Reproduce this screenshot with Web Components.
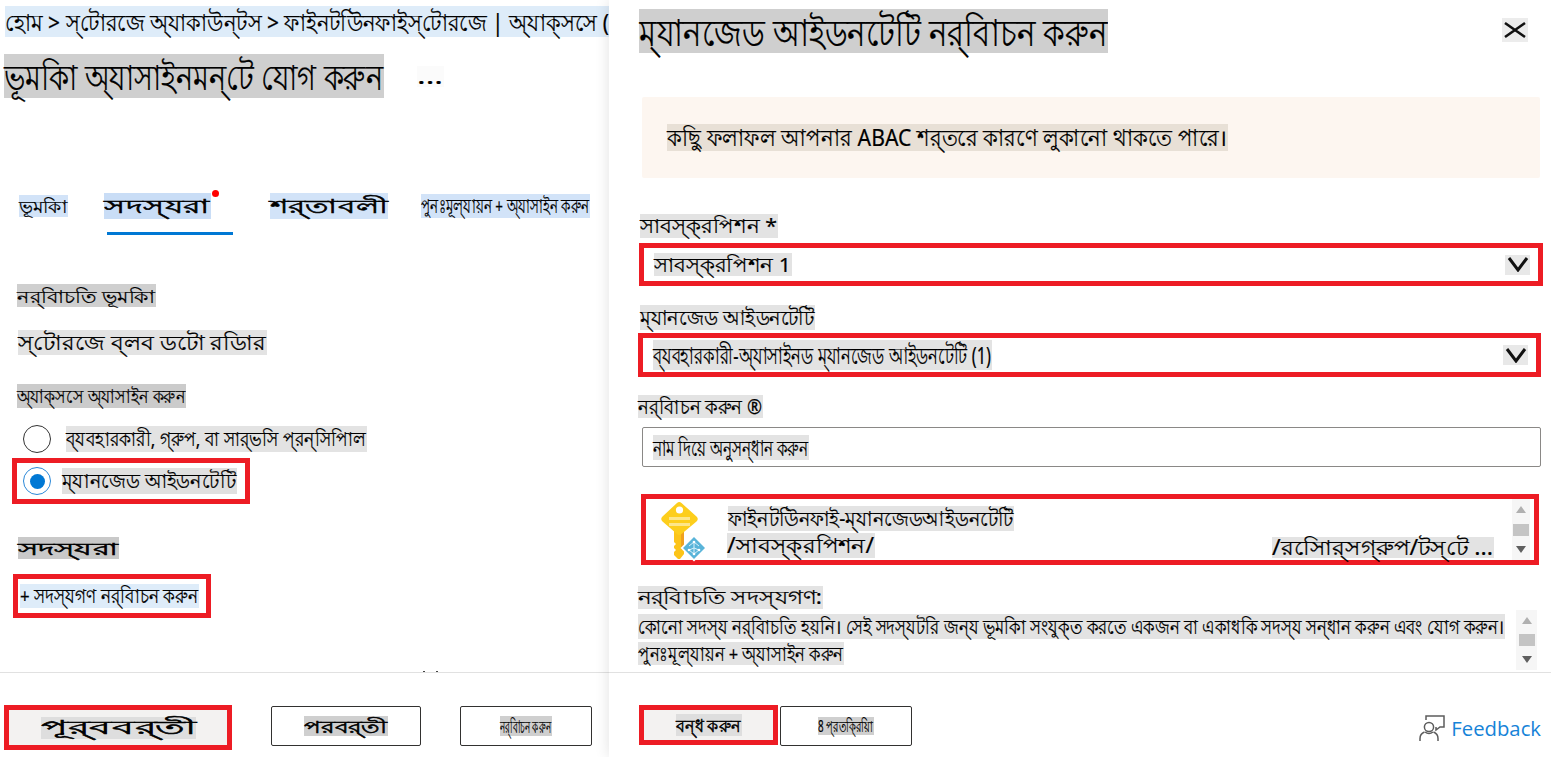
<!DOCTYPE html>
<html lang="bn">
<head>
<meta charset="utf-8">
<title>ভূমিকা অ্যাসাইনমেন্ট যোগ করুন</title>
<style>
  html, body { margin: 0; height: 757px; overflow: hidden; background: #fff; }
  body { display: flex; font-family: "Noto Sans", "Liberation Sans", sans-serif; color: #000; }
</style>
</head>
<body>
<left-blade></left-blade>
<right-blade></right-blade>

<script>
// text on a tinted block, squeezed or stretched to the width of the block
class TextChip extends HTMLElement {
  constructor() {
    super();
    this.attachShadow({ mode: "open" });
    this.shadowRoot.innerHTML = `
      <style>
        :host { display: inline-flex; align-items: center; flex: none; white-space: nowrap; line-height: 1; -webkit-text-stroke: .2px #000; }
        span { display: inline-block; flex: none; transform-origin: 0 50%; }
      </style>
      <span><slot></slot></span>
    `;
  }

  connectedCallback() {
    const w = +this.getAttribute("w");
    this.style.width = w + "px";
    this.style.height = this.getAttribute("h") + "px";
    this.style.fontSize = this.getAttribute("fs") + "px";
    this.style.background = this.getAttribute("bg") || "transparent";
    if (this.hasAttribute("bold")) this.style.webkitTextStroke = ".55px #000";
    const span = this.shadowRoot.querySelector("span");
    const natural = span.getBoundingClientRect().width;
    if (natural > 0) span.style.transform = `scaleX(${(w - 1) / natural})`;
  }
}

class RedBox extends HTMLElement {
  constructor() {
    super();
    this.attachShadow({ mode: "open" });
    this.shadowRoot.innerHTML = `
      <style>
        :host { display: flex; align-items: center; box-sizing: border-box; border: 5px solid #ed1c24; flex: none; }
      </style>
      <slot></slot>
    `;
  }
}

class RadioDot extends HTMLElement {
  constructor() {
    super();
    this.attachShadow({ mode: "open" });
    const on = this.hasAttribute("checked");
    this.shadowRoot.innerHTML = `
      <style>
        :host { display: flex; align-items: center; justify-content: center; box-sizing: border-box; flex: none;
          width: 28px; height: 28px; border-radius: 50%; border: 1px solid ${on ? "#2b88d8" : "#333"}; }
        i { width: 15px; height: 15px; border-radius: 50%; background: #0078d4; }
      </style>
      ${on ? "<i></i>" : ""}
    `;
  }
}

class OutlineButton extends HTMLElement {
  constructor() {
    super();
    this.attachShadow({ mode: "open" });
    this.shadowRoot.innerHTML = `
      <style>
        :host { display: flex; align-items: center; justify-content: center; box-sizing: border-box; flex: none;
          height: 40px; border: 1px solid #323130; border-radius: 2px; }
      </style>
      <slot></slot>
    `;
  }
}

class ScrollRail extends HTMLElement {
  constructor() {
    super();
    this.attachShadow({ mode: "open" });
    this.shadowRoot.innerHTML = `
      <style>
        :host { display: flex; flex-direction: column; align-items: center; justify-content: space-between; box-sizing: border-box;
          flex: none; background: #f6f6f6; padding: 7px 0; }
        .thumb { width: 100%; height: 12px; background: #c4c4c4; }
        .thumb-wrap { width: 16px; }
        b { width: 0; height: 0; border: 5px solid transparent; }
        .up { border-top: 0; border-bottom: 7px solid #b0b0b0; }
        .down { border-bottom: 0; border-top: 7px solid #5f5f5f; }
      </style>
      <b class="up"></b>
      <div class="thumb-wrap"><div class="thumb"></div></div>
      <b class="down"></b>
    `;
  }
}

class KeyIcon extends HTMLElement {
  constructor() {
    super();
    this.attachShadow({ mode: "open" });
    this.shadowRoot.innerHTML = `
      <style>:host { display: block; flex: none; width: 42px; height: 60px; } svg { display: block; overflow: visible; }</style>
      <svg width="42" height="60" viewBox="0 0 42 60">
        <path d="M14 30h10v23l-4 5h-2l-4-4v-3l2-2-2-2v-2l2-2-2-2z" fill="#fcc419"/>
        <path d="M21 30h3v16l-3 3z" fill="#f0a11f"/>
        <path d="M17 2a3.500 3.500 0 0 1 4.500 0l15 13.500a3.500 3.500 0 0 1 0 5L21.500 33a3.500 3.500 0 0 1-4.500 0L2.500 20.500a3.500 3.500 0 0 1 0-5z" fill="#fdce1c"/>
        <circle cx="19.500" cy="9" r="3.600" fill="#fff"/>
        <rect x="9" y="16" width="21" height="3" fill="#fde68a"/>
        <rect x="9" y="22" width="21" height="3" fill="#fde68a"/>
        <path d="M34 33.500l13.500 13.500-13.500 13.500-13.500-13.500z" fill="#fff"/>
        <path d="M34 36l11 11-11 11-11-11z" fill="#59b4d9"/>
        <path d="M34 41v12M34 47l-5 2M34 47l5 2M29 49l5 4 5-4M29 45l5-4 5 4" fill="none" stroke="#d7f0fa" stroke-width="1"/>
        <circle cx="34" cy="41" r="1.300" fill="#fff"/><circle cx="29" cy="49" r="1.300" fill="#fff"/>
        <circle cx="39" cy="49" r="1.300" fill="#fff"/><circle cx="34" cy="53" r="1.300" fill="#fff"/>
      </svg>
    `;
  }
}

class FeedbackLink extends HTMLElement {
  constructor() {
    super();
    this.attachShadow({ mode: "open" });
    this.shadowRoot.innerHTML = `
      <style>
        :host { display: flex; align-items: center; gap: 6px; color: #1683d8; font: 20.300px "Open Sans", "Noto Sans", sans-serif; flex: none; }
        svg { display: block; }
      </style>
      <svg width="26" height="26" viewBox="0 0 26 26" fill="none" stroke="#5c5c5c" stroke-width="1.500">
        <path d="M7 5V1h18v11h-4l-4 3v-3"/>
        <circle cx="10" cy="12" r="4.600"/>
        <path d="M1 26v-2.500a7 7 0 0 1 4.500-6.500M19 26v-2.500a7 7 0 0 0-4.500-6.500"/>
        <path d="M14 17c-1.300 1-2.500 1.500-4 1.500s-2.700-.5-4-1.500"/>
      </svg>
      <span>Feedback</span>
    `;
  }
}

class LeftBlade extends HTMLElement {
  constructor() {
    super();
    this.attachShadow({ mode: "open" });
    this.shadowRoot.innerHTML = `
      <style>
        :host { display: flex; flex-direction: column; flex: none; width: 609px; height: 757px; overflow: hidden; box-sizing: border-box; }
        .crumb { margin: 6px 0 0 5px; }
        .title { display: flex; align-items: flex-start; margin: 17px 0 0 4px; }
        .more { margin: 12px 0 0 33px; }
        .tabs { position: relative; display: flex; margin: 95px 0 0 19px; height: 26px; align-items: center; }
        .dot { position: absolute; left: 193px; top: -3px; width: 7px; height: 7px; border-radius: 50%; background: #f00; }
        .underline { margin: 13px 0 0 107px; width: 126px; height: 3px; background: #0078d4; }
        .block { margin-left: 17px; }
        .row { display: flex; align-items: center; }
        .spacer { flex: 1; }
        .foot { position: relative; height: 85px; box-sizing: border-box; border-top: 1px solid #e1e1e1; padding: 32px 0 0 4px; display: flex; align-items: flex-start; }
        .foot::before, .foot::after { content: ""; position: absolute; top: -2px; width: 2px; height: 1px; background: #444; }
        .foot::before { left: 423px; }
        .foot::after { left: 436px; }
      </style>
      <text-chip class="crumb" w="605" h="31" fs="24" bg="#deecf9">হোম &gt; স্‌টোরজে অ্‌যাকাউন্‌টস &gt; ফাইনটউিনফাইস্‌টোরজে | অ্‌যাক্‌সসে (</text-chip>
      <div class="title">
        <text-chip w="380" h="44" fs="35" bg="#cfcfcf">ভূমকিা অ্‌যাসাইনমন্‌টে যোগ করুন</text-chip>
        <text-chip class="more" w="27" h="21" fs="21" bg="#fbfbfb">...</text-chip>
      </div>
      <div class="tabs">
        <text-chip w="49" h="22" fs="18" bg="#d2e3f8">ভূমকিা</text-chip>
        <text-chip w="107" h="26" fs="19" bg="#c9ddf6" bold style="margin-left:36px">সদস্‌যরা</text-chip>
        <text-chip w="118" h="26" fs="19" bg="#d2e3f8" bold style="margin-left:59px">শর্‌তাবলী</text-chip>
        <text-chip w="169" h="24" fs="20" bg="#d2e3f8" style="margin-left:33px">পুনঃমূল্‌যায়ন + অ্‌যাসাইন করুন</text-chip>
        <span class="dot"></span>
      </div>
      <div class="underline"></div>
      <text-chip class="block" style="margin-top:49px" w="139" h="23" fs="18" bg="#cfcfcf">নর্‌বিাচতি ভূমকিা</text-chip>
      <text-chip class="block" style="margin:23px 0 0 18px" w="249" h="25" fs="21" bg="#e3e3e3">স্‌টোরজে ব্‌লব ডটো রডিার</text-chip>
      <text-chip class="block" style="margin-top:29px" w="169" h="24" fs="19" bg="#cbcbcb">অ্‌যাক্‌সসে অ্‌যাসাইন করুন</text-chip>
      <div class="row" style="margin:17px 0 0 23px">
        <radio-dot></radio-dot>
        <text-chip w="301" h="26" fs="20" bg="#e3e3e3" style="margin-left:15px">ব্‌যবহারকারী, গ্‌রুপ, বা সার্‌ভসি প্‌রন্‌সিপিাল</text-chip>
      </div>
      <red-box style="margin:5px 0 0 12px;width:238px;height:46px;padding-left:6px">
        <radio-dot checked></radio-dot>
        <text-chip w="175" h="26" fs="20" bg="#e0e0e0" style="margin-left:11px">ম্‌যানজেড আইডনটেটি</text-chip>
      </red-box>
      <text-chip style="margin:33px 0 0 18px" w="101" h="22" fs="17" bg="#c9c9c9" bold>সদস্‌যরা</text-chip>
      <red-box style="margin:15px 0 0 13px;width:198px;height:44px;padding-left:2px">
        <text-chip w="179" h="24" fs="20" bg="#deecf9">+ সদস্‌যগণ নর্‌বিাচন করুন</text-chip>
      </red-box>
      <div class="spacer"></div>
      <div class="foot">
        <red-box style="width:228px;height:45px;background:#f3f2f1;justify-content:center">
          <text-chip w="155" h="22" fs="19" bg="#dedede" bold>পূর্‌ববর্‌তী</text-chip>
        </red-box>
        <outline-button style="width:150px;margin:1px 0 0 39px"><text-chip w="84" h="20" fs="17" bg="#cfcfcf" bold>পরবর্‌তী</text-chip></outline-button>
        <outline-button style="width:132px;margin:1px 0 0 39px"><text-chip w="52" h="20" fs="18" bg="#cfcfcf">নর্‌বিাচন করুন</text-chip></outline-button>
      </div>
    `;
  }
}

class RightBlade extends HTMLElement {
  constructor() {
    super();
    this.attachShadow({ mode: "open" });
    this.shadowRoot.innerHTML = `
      <style>
        :host { display: flex; flex-direction: column; flex: none; width: 942px; height: 757px; overflow: hidden; box-sizing: border-box;
          background: #fff; box-shadow: 0 0 14px rgba(0,0,0,.12); position: relative; }
        .head { display: flex; justify-content: space-between; align-items: flex-start; margin: 9px 23px 0 30px; }
        .close { display: flex; align-items: center; justify-content: center; width: 26px; height: 24px; background: #ececec; margin-top: 9px; }
        .warn { display: flex; align-items: center; box-sizing: border-box; margin: 44px 0 0 33px; width: 898px; height: 81px; padding-left: 25px; background: #fdf6f0; border-radius: 2px; }
        .select { justify-content: space-between; padding: 0 8px 0 10px; }
        .chev { display: flex; align-items: center; justify-content: center; width: 25px; height: 20px; background: #e8e8e8; }
        .input { display: flex; align-items: center; box-sizing: border-box; margin: 9px 0 0 33px; width: 899px; height: 40px; padding-left: 10px; border: 1px solid #8a8886; border-radius: 2px; }
        .listbox { margin: 27px 0 0 32px; width: 898px; height: 71px; padding-left: 14px; align-items: stretch; }
        .lines { flex: 1; display: flex; flex-direction: column; padding: 7px 0 0 26px; }
        .line2 { display: flex; justify-content: space-between; width: 767px; margin-left: -1px; margin-top: 2px; align-items: flex-end; }
        .picked { display: flex; justify-content: space-between; margin: 1px 14px 0 29px; height: 60px; }
        .picked-text { display: flex; flex-direction: column; gap: 3px; padding-top: 4px; }
        .spacer { flex: 1; }
        .foot { height: 85px; box-sizing: border-box; border-top: 1px solid #e1e1e1; padding: 32px 10px 0 30px; display: flex; align-items: flex-start; }
      </style>
      <div class="head">
        <text-chip w="469" h="44" fs="37" bg="#cfcfcf">ম্‌যানজেড আইডনটেটি নর্‌বিাচন করুন</text-chip>
        <div class="close">
          <svg width="24" height="18" viewBox="0 0 24 18" fill="none" stroke="#111" stroke-width="2.600"><path d="M2 2l20 14M22 2L2 16"/></svg>
        </div>
      </div>
      <div class="warn"><text-chip w="561" h="27" fs="23" bg="#e8e0d6">কছিু ফলাফল আপনার ABAC শর্‌তরে কারণে লুকানো থাকতে পারে।</text-chip></div>
      <text-chip style="margin:36px 0 0 31px" w="138" h="24" fs="20" bg="#e3e3e3">সাবস্‌ক্‌রপিশন *</text-chip>
      <red-box class="select" style="margin:5px 0 0 30px;width:904px;height:43px">
        <text-chip w="138" h="23" fs="20" bg="#e3e3e3">সাবস্‌ক্‌রপিশন 1</text-chip>
        <div class="chev"><svg width="22" height="15" viewBox="0 0 22 15" fill="none" stroke="#111" stroke-width="3"><path d="M2 1l9 12 9-12"/></svg></div>
      </red-box>
      <text-chip style="margin:19px 0 0 31px" w="175" h="25" fs="21" bg="#e3e3e3">ম্‌যানজেড আইডনটেটি</text-chip>
      <red-box class="select" style="margin:3px 0 0 29px;width:903px;height:44px">
        <text-chip w="339" h="30" fs="24" bg="#e3e3e3">ব্‌যবহারকারী-অ্‌যাসাইনড ম্‌যানজেড আইডনটেটি (1)</text-chip>
        <div class="chev"><svg width="22" height="15" viewBox="0 0 22 15" fill="none" stroke="#111" stroke-width="3"><path d="M2 1l9 12 9-12"/></svg></div>
      </red-box>
      <text-chip style="margin:18px 0 0 29px" w="125" h="23" fs="20" bg="#e3e3e3">নর্‌বিাচন করুন ®</text-chip>
      <div class="input"><text-chip w="156" h="25" fs="22" bg="#e3e3e3">নাম দিয়ে অনুসন্‌ধান করুন</text-chip></div>
      <red-box class="listbox">
        <key-icon style="margin-top:2px"></key-icon>
        <div class="lines">
          <text-chip w="286" h="25" fs="21" bg="#e3e3e3">ফাইনটউিনফাই-ম্‌যানজেডআইডনটেটি</text-chip>
          <div class="line2">
            <text-chip w="148" h="25" fs="21" bg="#e3e3e3">/সাবস্‌ক্‌রপিশন/</text-chip>
            <text-chip w="222" h="21" fs="21" bg="#e3e3e3">/রসিোর্‌সগ্‌রুপ/টস্‌টে ...</text-chip>
          </div>
        </div>
        <scroll-rail style="width:18px;margin:0 4px 0 0"></scroll-rail>
      </red-box>
      <text-chip style="margin:21px 0 0 29px" w="185" h="23" fs="19" bg="#e3e3e3">নর্‌বিাচতি সদস্‌যগণ:</text-chip>
      <div class="picked">
        <div class="picked-text">
          <text-chip w="867" h="25" fs="20" bg="#e3e3e3">কোনো সদস্‌য নর্‌বিাচতি হয়নি। সেই সদস্‌যটরি জন্‌য ভূমকিা সংযুক্‌ত করতে একজন বা একাধকি সদস্‌য সন্‌ধান করুন এবং যোগ করুন।</text-chip>
          <text-chip w="206" h="23" fs="20" bg="#e3e3e3">পুনঃমূল্‌যায়ন + অ্‌যাসাইন করুন</text-chip>
        </div>
        <scroll-rail style="width:21px"></scroll-rail>
      </div>
      <div class="spacer"></div>
      <div class="foot">
        <red-box style="width:139px;height:40px;background:#f3f2f1;justify-content:center">
          <text-chip w="66" h="22" fs="18" bg="#dedede" bold>বন্‌ধ করুন</text-chip>
        </red-box>
        <outline-button style="width:132px;margin:1px 0 0 2px"><text-chip w="56" h="18" fs="16" bg="#cfcfcf">8 প্‌রতকি্‌রয়িা</text-chip></outline-button>
        <div class="spacer"></div>
        <feedback-link style="margin-top:9px"></feedback-link>
      </div>
    `;
  }
}

customElements.define("text-chip", TextChip);
customElements.define("red-box", RedBox);
customElements.define("radio-dot", RadioDot);
customElements.define("outline-button", OutlineButton);
customElements.define("scroll-rail", ScrollRail);
customElements.define("key-icon", KeyIcon);
customElements.define("feedback-link", FeedbackLink);
customElements.define("left-blade", LeftBlade);
customElements.define("right-blade", RightBlade);
</script>
</body>
</html>
